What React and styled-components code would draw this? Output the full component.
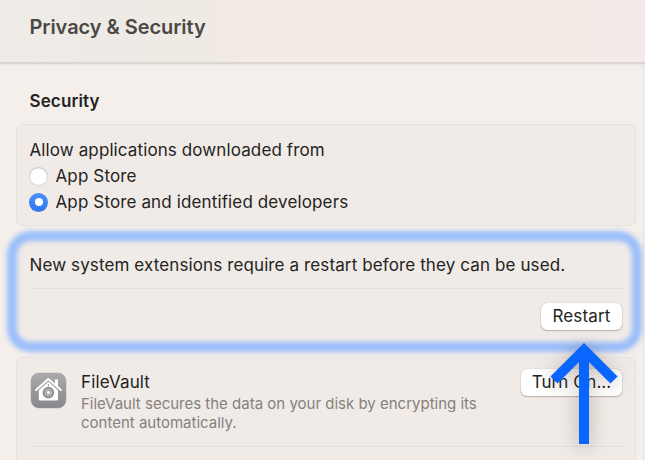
import React from "react";
import styled, { createGlobalStyle } from "styled-components";

const GlobalStyle = createGlobalStyle`
  * { box-sizing: border-box; }
  body {
    margin: 0;
    overflow: hidden;
    background: #f4efea;
    font-family: Inter, "Liberation Sans", sans-serif;
    font-size: 17px;
    color: #242322;
  }
`;

const Window = styled.div`
  width: 645px;
  height: 460px;
  overflow: hidden;
  position: relative;
  display: flex;
  flex-direction: column;
`;

const Header = styled.header`
  flex: none;
  height: 64px;
  padding: 14px 0 0 29.5px;
  background: linear-gradient(90deg, #efece7 0, #eeeae5 110px, #efeae4 190px, #f4ebe5 265px, #f4ebe6 570px, #f4eae8 600px, #f3ebe7 645px);
  border-bottom: 2px solid #dbd6d1;
  box-shadow: 0 1px 2px rgba(0, 0, 0, 0.06);
`;

const Title = styled.h1`
  margin: 0;
  font-size: 20px;
  line-height: 26px;
  font-weight: 600;
  letter-spacing: ${(p) => p.$spacing}px;
  color: #4a4845;
  white-space: nowrap;
`;

const Content = styled.main`
  flex: none;
  width: 644px;
  height: 396px;
  padding: 26px 8px 0 16px;
  border-right: 1px solid #e7e2de;
`;

const SectionTitle = styled.h2`
  margin: 0 0 12px 13.5px;
  font-size: 17px;
  line-height: 22px;
  font-weight: 600;
  letter-spacing: ${(p) => p.$spacing}px;
`;

const Card = styled.section`
  width: 620px;
  height: ${(p) => p.$height}px;
  padding: ${(p) => p.$top}px 13px 0 12.5px;
  border: 1px solid #e7e2de;
  border-radius: 7px;
  background: #f0ebe7;
`;

const HighlightedCard = styled(Card)`
  position: relative;
  margin: 10px 0 11px;
  border-color: transparent;

  &::before {
    content: "";
    position: absolute;
    inset: -6px -7px -7px -10px;
    border: 10px solid #99bdfb;
    border-radius: 24px;
    filter: blur(2.7px);
    pointer-events: none;
  }
`;

const Text = styled.div`
  line-height: 22px;
  white-space: nowrap;
  letter-spacing: ${(p) => p.$spacing}px;
`;

const Options = styled.div`
  padding-top: 2px;
`;

const Option = styled.label`
  display: flex;
  align-items: center;
  gap: 7.5px;
  height: 26px;
`;

const Radio = styled.span`
  flex: none;
  width: 19px;
  height: 19px;
  margin-left: -0.5px;
  border-radius: 50%;
  display: grid;
  place-items: center;
  background: ${(p) => (p.$checked ? "linear-gradient(#4b91fb, #2f74f3)" : "#fff")};
  box-shadow: ${(p) => (p.$checked ? "none" : "inset 0 0 0 1px #d9d5d1, inset 0 1px 1px #bbb7b3")};

  &::after {
    content: "";
    width: 8px;
    height: 8px;
    border-radius: 50%;
    background: #fff;
  }
`;

const Divider = styled.div`
  height: 1px;
  background: #e3deda;
`;

const Button = styled.button`
  display: block;
  flex: none;
  width: ${(p) => p.$width}px;
  height: 27px;
  padding: 0;
  border: 0;
  border-radius: 6px;
  background: #fff;
  box-shadow: 0 0 1px rgba(0, 0, 0, 0.3), 0 1px 1.5px rgba(0, 0, 0, 0.24);
  font: inherit;
  line-height: 25px;
  letter-spacing: ${(p) => p.$spacing}px;
  color: inherit;
  white-space: nowrap;
`;

const RestartRow = styled.div`
  display: flex;
  justify-content: flex-end;
  padding-top: 14px;
`;

const VaultRow = styled.div`
  display: flex;
  height: 77px;
`;

const VaultIcon = styled.svg`
  flex: none;
  width: 37px;
  height: 37px;
  margin: 3px 14.5px 0 0;
`;

const VaultBody = styled.div`
  flex: 1;
  padding-top: 2px;
`;

const Description = styled.p`
  margin: 1px 0 0;
  font-size: 15px;
  line-height: 19px;
  color: #85817e;
  white-space: nowrap;
  letter-spacing: ${(p) => p.$spacing}px;
`;

const Arrow = styled.svg`
  position: absolute;
  left: 535px;
  top: 330px;
  width: 100px;
  height: 130px;
  overflow: visible;
  filter: drop-shadow(0 2px 9px rgba(55, 35, 20, 0.34));
`;

function FileVaultIcon() {
  return (
    <VaultIcon viewBox="0 0 37 37">
      <defs>
        <linearGradient id="tile" x2="0" y2="1">
          <stop stopColor="#aaa9ac" />
          <stop offset="1" stopColor="#88878b" />
        </linearGradient>
      </defs>
      <rect x="1" y="1" width="35" height="35" rx="8" fill="url(#tile)" stroke="#a19f9f" strokeWidth=".5" />
      <path d="M6 18 18.3 6.9 31 18" fill="none" stroke="#fff" strokeWidth="2" strokeLinecap="round" strokeLinejoin="round" />
      <path d="M25 7.5h3v8l-3-2.7z" fill="#fff" />
      <path d="M8.8 18.3 18.4 9.8 28 18.3V27q0 1.5-1.5 1.5h-16Q8.8 28.5 8.8 27z" fill="#fff" />
      <circle cx="18.4" cy="20.6" r="4.9" fill="#a3a2a5" stroke="#8d8c8f" strokeWidth="1.8" />
      <circle cx="18.4" cy="20.6" r="3" fill="none" stroke="#d8d8da" strokeWidth="1.5" strokeDasharray=".8 1.556" />
      <circle cx="18.4" cy="20.6" r="1.5" fill="#fff" />
      <path d="M18.4 12v2" stroke="#8f8e91" strokeWidth="1" />
    </VaultIcon>
  );
}

export default function App() {
  return (
    <>
      <GlobalStyle />
      <Window>
        <Header>
          <Title $spacing={-0.05}>Privacy &amp; Security</Title>
        </Header>
        <Content>
          <SectionTitle $spacing={0.13}>Security</SectionTitle>
          <Card $height={102} $top={14}>
            <Text $spacing={0.11}>Allow applications downloaded from</Text>
            <Options>
              <Option>
                <Radio />
                <Text $spacing={0.13}>App Store</Text>
              </Option>
              <Option>
                <Radio $checked />
                <Text $spacing={0.13}>App Store and identified developers</Text>
              </Option>
            </Options>
          </Card>
          <HighlightedCard $height={110} $top={17}>
            <Text $spacing={0.115}>New system extensions require a restart before they can be used.</Text>
            <Divider style={{ marginTop: 12 }} />
            <RestartRow>
              <Button $width={81} $spacing={0.15}>Restart</Button>
            </RestartRow>
          </HighlightedCard>
          <Card $height={140} $top={11}>
            <VaultRow>
              <FileVaultIcon />
              <VaultBody>
                <Text $spacing={0.15}>FileVault</Text>
                <Description $spacing={0}>
                  FileVault secures the data on your disk by encrypting its
                  <br />
                  content automatically.
                </Description>
              </VaultBody>
              <Button $width={101} $spacing={0.05}>Turn On...</Button>
            </VaultRow>
            <Divider />
          </Card>
        </Content>
        <Arrow viewBox="0 0 100 130">
          <path d="M49 114V20M19 50 49 20 79 50" fill="none" stroke="#0866ff" strokeWidth="10" />
        </Arrow>
      </Window>
    </>
  );
}
